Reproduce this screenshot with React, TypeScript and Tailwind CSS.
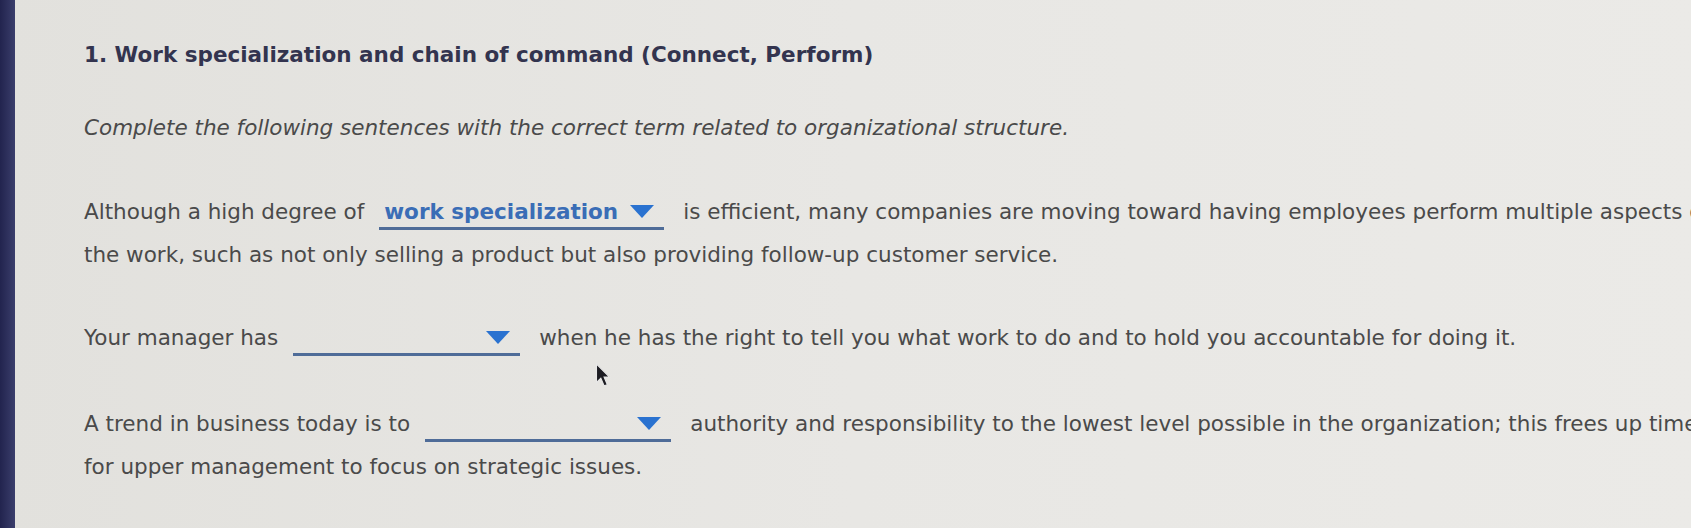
import React from 'react';

function Blank({ width, value }: { width: string; value?: string }) {
  return (
    <span className={`inline-flex items-end justify-between align-baseline border-b-[3px] border-[#4f6c98] ${width} ml-[15px] mr-[19px] pl-[5px] pr-[10px] leading-[30px]`}>
      <span className="font-bold text-[#3a6db6]">{value ?? '\u00a0'}</span>
      <svg width="24" height="13" viewBox="0 0 24 13" className="mb-[9px]">
        <polygon points="0,0 24,0 12,13" fill="#2a72d0" />
      </svg>
    </span>
  );
}

export default function App() {
  return (
    <div className="relative w-[1691px] h-[528px] overflow-hidden flex bg-gradient-to-r from-[#e2e1dd] via-[#e8e7e4] to-[#ebeae7] font-['DejaVu_Sans',sans-serif] text-[21.5px] text-[#4a4a4a]">
      <div className="w-[15px] shrink-0 bg-gradient-to-r from-[#22244e] to-[#3b3e6c]" />
      <div className="pl-[69px] pt-[39px] w-[1740px] shrink-0">
        <h1 className="font-bold text-[21.5px] text-[#33344f] leading-[32px]">
          1. Work specialization and chain of command (Connect, Perform)
        </h1>
        <p className="italic mt-[41px] leading-[32px]">
          Complete the following sentences with the correct term related to organizational structure.
        </p>
        <p className="mt-[46px] leading-[43px] w-[1640px]">
          Although a high degree of
          <Blank width="w-[285px]" value="work specialization" />
          is efficient, many companies are moving toward having employees perform multiple aspects of the work, such as not only selling a product but also providing follow-up customer service.
        </p>
        <p className="mt-[40px] leading-[43px]">
          Your manager has
          <Blank width="w-[227px]" />
          when he has the right to tell you what work to do and to hold you accountable for doing it.
        </p>
        <p className="mt-[43px] leading-[43px] w-[1640px]">
          A trend in business today is to
          <Blank width="w-[246px]" />
          authority and responsibility to the lowest level possible in the organization; this frees up time for upper management to focus on strategic issues.
        </p>
      </div>
      <svg width="18" height="26" viewBox="0 0 16 24" className="absolute left-[594px] top-[363px]">
        <path d="M2 1 L2 18 L6 14 L9 21 L12 20 L9 13 L14 13 Z" fill="#1c1c22" stroke="#e8e8e8" strokeWidth="1" />
      </svg>
    </div>
  );
}
